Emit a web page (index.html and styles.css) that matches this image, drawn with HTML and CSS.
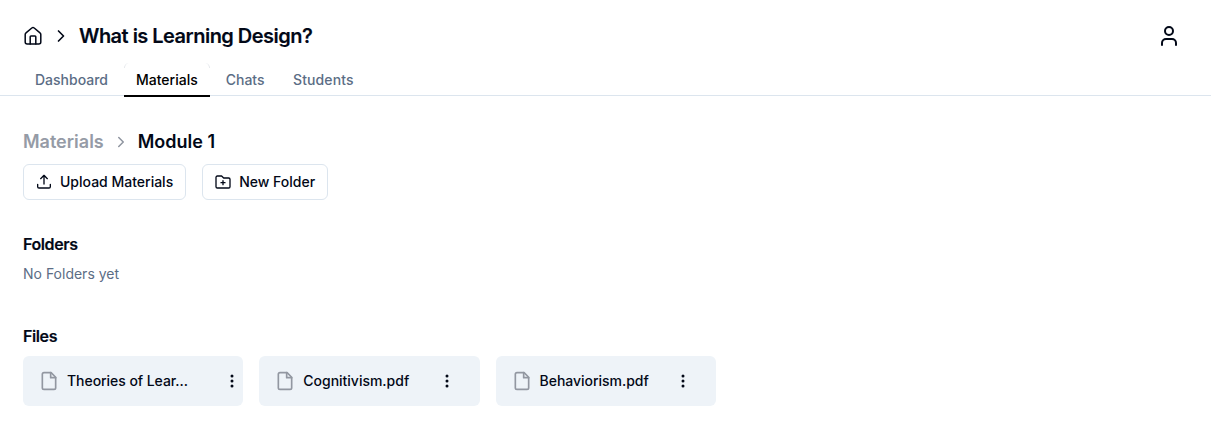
FILE: index.html
```html
<!DOCTYPE html>
<html lang="en"><head><meta charset="utf-8"><title>What is Learning Design?</title><link rel="stylesheet" href="styles.css"></head>
<body>
<header class="header">
<div class="topbar">
<svg class="icon home" viewBox="0 0 20 20"><path d="M2.200 8.500a2 2 0 0 1 .8-1.600L8.800 2a2 2 0 0 1 2.400 0L17 6.900a2 2 0 0 1 .8 1.600V16a2 2 0 0 1-2 2H4.200a2 2 0 0 1-2-2z"/><path d="M7.200 18v-7.300a.8.8 0 0 1 .8-.8h4a.8.8 0 0 1 .8.8V18"/></svg>
<svg class="icon chevron" viewBox="0 0 24 24"><path d="m9 18 6-6-6-6"/></svg>
<h1 class="title">What is Learning Design?</h1>
<svg class="icon user" viewBox="0 0 24 24"><circle cx="12" cy="7" r="4"/><path d="M19 21v-2a4 4 0 0 0-4-4H9a4 4 0 0 0-4 4v2"/></svg>
</div>
<nav class="tabs"><a class="tab">Dashboard</a><a class="tab active">Materials</a><a class="tab">Chats</a><a class="tab students">Students</a></nav>
</header>
<main class="main">
<div class="crumbs"><span class="parent">Materials</span><svg class="icon crumb-chevron" viewBox="0 0 24 24"><path d="m9 18 6-6-6-6"/></svg><span>Module 1</span></div>
<div class="actions">
<button class="button"><svg class="icon small" viewBox="0 0 24 24"><path d="M21.500 15.500V19a2 2 0 0 1-2 2h-15a2 2 0 0 1-2-2v-3.500M17 7l-5-5-5 5M12 2v13"/></svg>Upload Materials</button>
<button class="button"><svg class="icon small" viewBox="0 0 24 24"><path d="M12 10v6M9 13h6M20.500 21a2 2 0 0 0 2-2V8a2 2 0 0 0-2-2H13L9.900 3H3.500a2 2 0 0 0-2 2v14a2 2 0 0 0 2 2z"/></svg>New Folder</button>
</div>
<section class="folders"><h2 class="heading">Folders</h2><p class="empty">No Folders yet</p></section>
<section class="files"><h2 class="heading">Files</h2>
<div class="file-list">
<article class="file"><svg class="icon doc" viewBox="0 0 24 24"><path d="M14.500 2H6a2 2 0 0 0-2 2v16a2 2 0 0 0 2 2h12a2 2 0 0 0 2-2V7.500z"/><path d="M14 2v6h6"/></svg><span class="name wide">Theories of Lear...</span><svg class="more" viewBox="0 0 16 16"><circle cx="8" cy="3" r="1.500"/><circle cx="8" cy="8" r="1.500"/><circle cx="8" cy="13" r="1.500"/></svg></article>
<article class="file"><svg class="icon doc" viewBox="0 0 24 24"><path d="M14.500 2H6a2 2 0 0 0-2 2v16a2 2 0 0 0 2 2h12a2 2 0 0 0 2-2V7.500z"/><path d="M14 2v6h6"/></svg><span class="name">Cognitivism.pdf</span><svg class="more" viewBox="0 0 16 16"><circle cx="8" cy="3" r="1.500"/><circle cx="8" cy="8" r="1.500"/><circle cx="8" cy="13" r="1.500"/></svg></article>
<article class="file"><svg class="icon doc" viewBox="0 0 24 24"><path d="M14.500 2H6a2 2 0 0 0-2 2v16a2 2 0 0 0 2 2h12a2 2 0 0 0 2-2V7.500z"/><path d="M14 2v6h6"/></svg><span class="name last">Behaviorism.pdf</span><svg class="more" viewBox="0 0 16 16"><circle cx="8" cy="3" r="1.500"/><circle cx="8" cy="8" r="1.500"/><circle cx="8" cy="13" r="1.500"/></svg></article>
</div></section>
</main>
</body></html>
```
FILE: styles.css
```css
* { box-sizing: border-box; }
body { margin: 0; background: #fff; color: #020817; font: 500 14px/20px Inter, sans-serif; }
h1, h2, p { margin: 0; }
.icon { fill: none; stroke: currentColor; stroke-width: 2; stroke-linecap: round; stroke-linejoin: round; flex: none; }
.header { height: 96px; border-bottom: 1px solid #dce5ee; }
.topbar { height: 64px; padding: 8px 30px 0 23px; display: flex; align-items: center; }
.home { width: 20px; height: 20px; stroke-width: 1.5; }
.chevron { width: 20px; height: 20px; margin-left: 8px; }
.title { margin-left: 8px; font-size: 20px; line-height: 28px; font-weight: 600; letter-spacing: -.52px; -webkit-text-stroke: .15px; }
.user { width: 24px; height: 24px; margin-left: auto; }
.tabs { display: flex; height: 33px; padding-left: 23px; gap: 4px; }
.tab { height: 33px; padding: 6px 12px; color: #5b6d85; }
.tab.active { color: #000; border-bottom: 2px solid #000; position: relative; }
.tab.active::before { content: ""; position: absolute; inset: -1px 0 auto; height: 5px; border: 1px solid #e5e8ec; border-width: 0 1px; border-radius: 5px 5px 0 0; }
.students { letter-spacing: .1px; margin-left: .5px; }
.main { padding: 32px 23px 0; }
.crumbs { height: 28px; display: flex; align-items: center; font-size: 18px; line-height: 28px; font-weight: 600; }
.parent { color: #959ba6; }
.crumb-chevron { width: 18px; height: 18px; margin: 0 8px; color: #8e949f; }
.actions { display: flex; gap: 16px; margin-top: 8px; }
.button { height: 36px; padding: 0 12px; display: flex; align-items: center; gap: 8px; background: #fff; border: 1px solid #dce5ee; border-radius: 6px; color: #020817; font: 500 14px/20px Inter, sans-serif; }
.small { width: 16px; height: 16px; }
.heading { font-size: 16px; line-height: 24px; font-weight: 600; letter-spacing: -.4px; -webkit-text-stroke: .15px; }
.folders { margin-top: 32px; }
.empty { margin-top: 8px; color: #5b6d85; font-weight: 400; }
.files { margin-top: 40px; }
.file-list { display: flex; gap: 16px; margin-top: 8px; }
.file { width: 220.300px; height: 50px; padding: 0 0 0 16px; border-radius: 6px; background: #eef3f8; display: flex; align-items: center; }
.doc { width: 20px; height: 20px; color: #9297a1; }
.name { width: 136px; margin-left: 8px; letter-spacing: -.01px; }
.name.wide { width: 157px; letter-spacing: -.05px; }
.name.last { width: 135px; letter-spacing: -.03px; }
.more { width: 16px; height: 16px; fill: currentColor; flex: none; }
```
